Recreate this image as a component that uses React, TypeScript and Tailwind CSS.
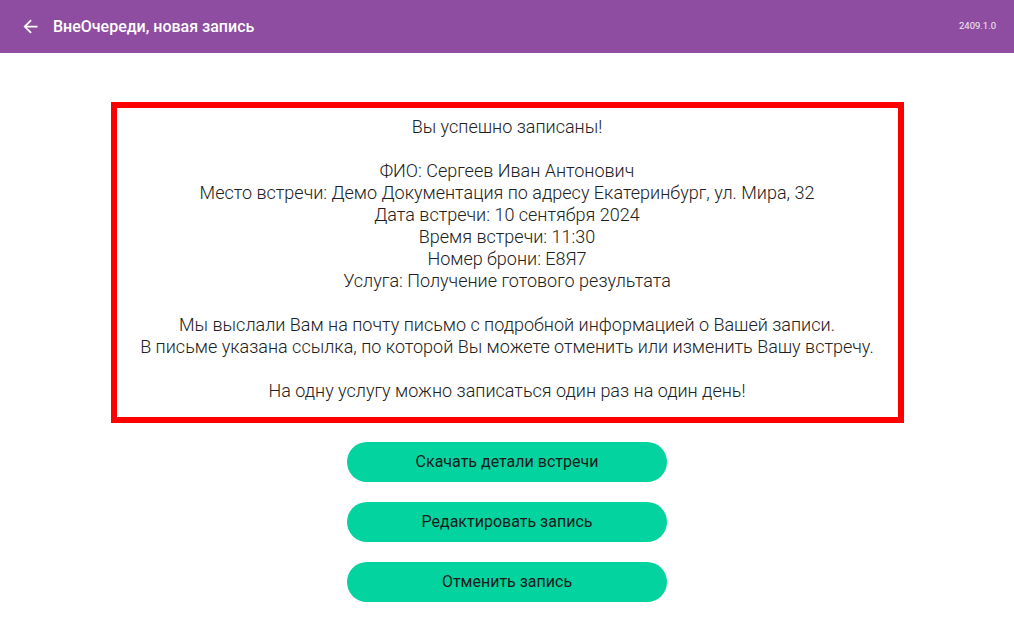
export default function App() {
  const font = { fontFamily: 'Roboto, "Noto Sans", sans-serif' };

  return (
    <div className="min-h-screen bg-white text-[#212121]" style={font}>
      {/* Header */}
      <header className="h-[53px] bg-[#8e4da0] flex items-center justify-between pl-[20px] pr-[18px] text-white">
        <div className="flex items-center gap-[12px]">
          <svg width="21" height="21" viewBox="0 0 24 24" fill="currentColor">
            <path d="M20 11H7.83l5.59-5.59L12 4l-8 8 8 8 1.41-1.41L7.83 13H20v-2z" />
          </svg>
          <span className="text-[16px] font-medium">ВнеОчереди, новая запись</span>
        </div>
        <span className="text-[9.5px] text-white/90">2409.1.0</span>
      </header>

      {/* Content */}
      <main className="flex flex-col items-center pt-[49px]">
        <div className="w-[793px] border-[6px] border-[#ff0000] pt-[8px] pb-[15px] text-center text-[18px] font-light leading-[22px]">
          <p>Вы успешно записаны!</p>
          <p>&nbsp;</p>
          <p>ФИО: Сергеев Иван Антонович</p>
          <p>Место встречи: Демо Документация по адресу Екатеринбург, ул. Мира, 32</p>
          <p>Дата встречи: 10 сентября 2024</p>
          <p>Время встречи: 11:30</p>
          <p>Номер брони: Е8Я7</p>
          <p>Услуга: Получение готового результата</p>
          <p>&nbsp;</p>
          <p>Мы выслали Вам на почту письмо с подробной информацией о Вашей записи.</p>
          <p>В письме указана ссылка, по которой Вы можете отменить или изменить Вашу встречу.</p>
          <p>&nbsp;</p>
          <p>На одну услугу можно записаться один раз на один день!</p>
        </div>

        <div className="flex flex-col gap-[20px] mt-[19px]">
          {['Скачать детали встречи', 'Редактировать запись', 'Отменить запись'].map((label) => (
            <button
              key={label}
              className="w-[320px] h-[40px] rounded-full bg-[#02d39f] text-[16px] text-[#1a1a1a]"
            >
              {label}
            </button>
          ))}
        </div>
      </main>
    </div>
  );
}
